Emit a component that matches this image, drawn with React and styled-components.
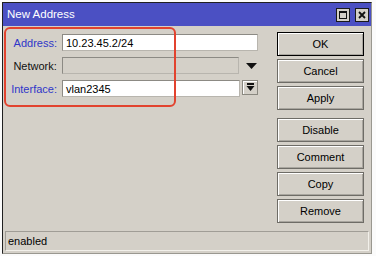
import React from "react";
import styled, { createGlobalStyle } from "styled-components";

const GlobalStyle = createGlobalStyle`
  html, body {
    margin: 0;
    padding: 0;
    background: #ffffff;
    font-family: "Liberation Sans", Arial, sans-serif;
  }
`;

// whole screen area
const Screen = styled.div`
  width: 376px;
  height: 256px;
  padding: 2px 0 0 2px;
  box-sizing: border-box;
  overflow: hidden;
  background: #fbfbfb;
`;

const Window = styled.div`
  position: relative;
  width: 370px;
  height: 252px;
  box-sizing: border-box;
  display: flex;
  flex-direction: column;
  background: #d4d0c8;
  border-top: 1px solid #202020;
  border-left: 1px solid #202020;
  border-right: 1px solid #9a9890;
  border-bottom: 1px solid #9a9890;
`;

const TitleBar = styled.div`
  height: 23px;
  flex: none;
  display: flex;
  align-items: center;
  padding: 0 2px 0 4px;
  background: #4b50c3;
`;

const Title = styled.div`
  flex: 1;
  color: #ffffff;
  font-size: 11.5px;
  padding-bottom: 1px;
`;

const TitleButton = styled.div`
  width: 12px;
  height: 12px;
  margin-left: ${(p) => (p.first ? "0" : "5px")};
  display: flex;
  align-items: center;
  justify-content: center;
  background: #d4d0c8;
  border: 1px solid #1a1a1a;
`;

const Body = styled.div`
  flex: 1;
  display: flex;
  padding: 6px 0 0 0;
`;

const Form = styled.div`
  width: 256px;
  display: flex;
  flex-direction: column;
  gap: 6px;
  padding-top: 2px;
`;

const Row = styled.div`
  display: flex;
  align-items: center;
  height: 17px;
`;

const Label = styled.div`
  width: 54px;
  margin-right: 5px;
  text-align: right;
  font-size: 11px;
  color: ${(p) => (p.blue ? "#2f36c8" : "#111111")};
`;

const Field = styled.div`
  width: ${(p) => p.w}px;
  height: 17px;
  box-sizing: border-box;
  display: flex;
  align-items: center;
  padding-left: 3px;
  font-size: 11px;
  color: #000;
  background: ${(p) => (p.disabled ? "#d4d0c8" : "#ffffff")};
  border: 1px solid #8c8a84;
  border-right-color: #b8b5ae;
  border-bottom-color: #b8b5ae;
`;

const ArrowSlot = styled.div`
  width: 16px;
  height: ${(p) => (p.boxed ? "15px" : "17px")};
  margin-left: ${(p) => (p.boxed ? "2px" : "4px")};
  box-sizing: border-box;
  display: flex;
  align-items: center;
  justify-content: center;
  background: #d4d0c8;
  border: ${(p) => (p.boxed ? "1px solid #8a8880" : "none")};
  box-shadow: ${(p) => (p.boxed ? "inset 1px 1px #fff" : "none")};
  align-self: flex-start;
`;

const Buttons = styled.div`
  margin-left: 18px;
  width: 87px;
  display: flex;
  flex-direction: column;
  gap: 3px;
`;

const Button = styled.div`
  height: 24px;
  box-sizing: border-box;
  display: flex;
  align-items: center;
  justify-content: center;
  font-size: 11px;
  color: #000;
  background: #d4d0c8;
  border: 1px solid ${(p) => (p.primary ? "#000000" : "#6e6c66")};
  box-shadow: inset 1px 1px #ffffff, inset -1px -1px #a9a69f;
  margin-top: ${(p) => (p.spaced ? "5px" : "0")};
`;

const StatusBar = styled.div`
  flex: none;
  height: 20px;
  margin: 0 2px 2px 2px;
  box-sizing: border-box;
  display: flex;
  align-items: center;
  padding-left: 2px;
  font-size: 11px;
  color: #000;
  border: 1px solid #a09d96;
  border-right-color: #f2f0ea;
  border-bottom-color: #f2f0ea;
`;

// red annotation drawn over the form
const Highlight = styled.div`
  position: absolute;
  left: 1px;
  top: 24px;
  width: 172px;
  height: 80px;
  box-sizing: border-box;
  border: 2px solid #e2432f;
  border-radius: 6px;
  pointer-events: none;
`;

const DownArrow = () => (
  <svg width="11" height="6" viewBox="0 0 11 6">
    <polygon points="0,0 11,0 5.5,6" fill="#111" />
  </svg>
);

const BarArrow = () => (
  <svg width="9" height="9" viewBox="0 0 9 9">
    <rect x="1" y="0" width="7" height="2" fill="#111" />
    <polygon points="0.5,3 8.5,3 4.5,8" fill="#111" />
  </svg>
);

const actions = [
  { name: "OK", primary: true },
  { name: "Cancel" },
  { name: "Apply" },
  { name: "Disable", spaced: true },
  { name: "Comment" },
  { name: "Copy" },
  { name: "Remove" },
];

const App = () => {
  return (
    <>
      <GlobalStyle />
      <Screen>
        <Window>
          <TitleBar>
            <Title>New Address</Title>
            <TitleButton first>
              <svg width="8" height="8" viewBox="0 0 8 8">
                <rect x="0.5" y="0.5" width="7" height="7" fill="none" stroke="#111" />
                <rect x="0" y="0" width="8" height="2" fill="#111" />
              </svg>
            </TitleButton>
            <TitleButton>
              <svg width="8" height="8" viewBox="0 0 8 8">
                <path d="M1 1 L7 7 M7 1 L1 7" stroke="#111" strokeWidth="1.8" />
              </svg>
            </TitleButton>
          </TitleBar>
          <Body>
            <Form>
              <Row>
                <Label blue>Address:</Label>
                <Field w={196}>10.23.45.2/24</Field>
              </Row>
              <Row>
                <Label>Network:</Label>
                <Field w={178} disabled />
                <ArrowSlot>
                  <DownArrow />
                </ArrowSlot>
              </Row>
              <Row>
                <Label blue>Interface:</Label>
                <Field w={178}>vlan2345</Field>
                <ArrowSlot boxed>
                  <BarArrow />
                </ArrowSlot>
              </Row>
            </Form>
            <Buttons>
              {actions.map((a) => (
                <Button key={a.name} primary={a.primary} spaced={a.spaced}>
                  {a.name}
                </Button>
              ))}
            </Buttons>
          </Body>
          <StatusBar>enabled</StatusBar>
          <Highlight />
        </Window>
      </Screen>
    </>
  );
};

export default App;
